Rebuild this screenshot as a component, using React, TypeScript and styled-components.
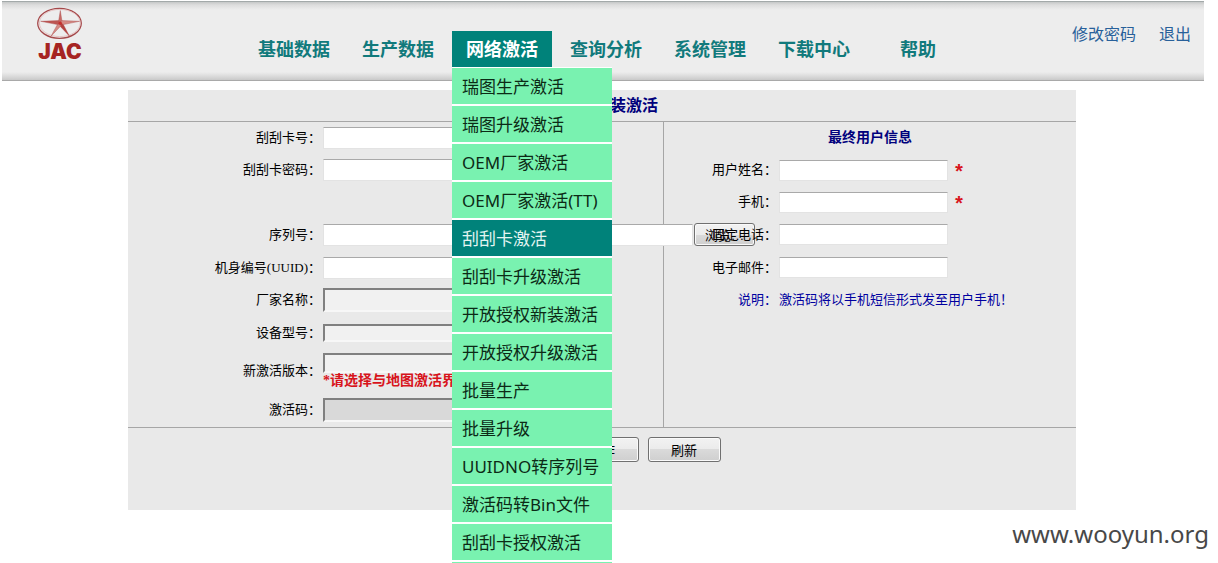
import React from "react";
import styled, { createGlobalStyle, css } from "styled-components";

const uiFont = `"Noto Sans", "Noto Sans CJK SC", sans-serif`;
const formFont = `"Liberation Serif", "Noto Sans CJK SC", serif`;

const GlobalStyle = createGlobalStyle`
  *, *::before, *::after { box-sizing: border-box; }
  body { margin: 0; background: #fff; font-family: ${uiFont}; color: #000; }
  ul { margin: 0; padding: 0; list-style: none; }
  a { text-decoration: none; }
`;

const Shell = styled.div`
  display: flow-root;
  min-height: 100vh;
`;

const Header = styled.header`
  display: flex;
  align-items: flex-start;
  height: 80px;
  margin: 1px 14px 9px 2px;
  border-top: 1px solid #a3a9a9;
  border-bottom: 1px solid #a9a9a9;
  background: linear-gradient(
    to bottom,
    #c6c8c8 0,
    #ddd 3px,
    #ededed 8px,
    #ededed calc(100% - 8px),
    #dcdcdc calc(100% - 4px),
    #c9c9c9 100%
  );
`;

const LogoLink = styled.a`
  flex: none;
  width: 242px;
  padding: 4px 0 0 28px;
  line-height: 0;
`;

const Nav = styled.ul`
  display: flex;
  gap: 4px;
  padding-top: 29px;
`;

const NavItem = styled.li`
  position: relative;
  width: 100px;
`;

const NavLink = styled.a<{ $active?: boolean }>`
  display: block;
  line-height: 36px;
  text-align: center;
  font-size: 18px;
  font-weight: 700;
  color: ${(p) => (p.$active ? "#fff" : "#117a7c")};
  background: ${(p) => (p.$active ? "#00827a" : "transparent")};
`;

const Menu = styled.ul`
  position: absolute;
  z-index: 10;
  top: 100%;
  left: 0;
  width: 160px;
  padding-top: 1px;
  background: #fff;
  &::after {
    content: "";
    display: block;
    height: 1px;
    background: #79f2b0;
  }
`;

const MenuLink = styled.a<{ $active?: boolean }>`
  display: block;
  height: 36px;
  margin-bottom: 2px;
  padding-left: 10px;
  line-height: 38px;
  font-size: 17px;
  white-space: nowrap;
  color: ${(p) => (p.$active ? "#e4f5f2" : "#0c2a16")};
  background: ${(p) => (p.$active ? "#00827a" : "#79f2b0")};
`;

const Account = styled.div`
  display: flex;
  gap: 23px;
  margin-left: auto;
  padding: 20px 13px 0 0;
`;

const AccountLink = styled.a`
  font-size: 16px;
  line-height: 24px;
  white-space: nowrap;
  color: #28609a;
`;

const Page = styled.main`
  padding-right: 14px;
`;

const Panel = styled.form`
  max-width: 948px;
  margin: 0 auto;
  background: #e9e9e9;
  font-family: ${formFont};
  font-size: 13px;
`;

const PanelTitle = styled.h1`
  margin: 0;
  line-height: 31px;
  text-align: center;
  font-size: 16px;
  color: #00007c;
`;

const Columns = styled.div`
  display: grid;
  grid-template-columns: minmax(0, 536fr) minmax(0, 412fr);
  border-top: 1px solid #a6a6a6;
  border-bottom: 1px solid #a6a6a6;
`;

const Column = styled.section<{ $divided?: boolean }>`
  ${(p) => p.$divided && css`border-right: 1px solid #a6a6a6;`}
`;

const SectionTitle = styled.h2`
  margin: 0;
  line-height: 32px;
  text-align: center;
  font-size: 14px;
  color: #00007c;
`;

const Row = styled.div<{ $label: number; $height?: number; $after?: number }>`
  display: grid;
  grid-template-columns: ${(p) => p.$label}px minmax(0, 1fr);
  column-gap: 2px;
  align-items: center;
  height: ${(p) => p.$height ?? 33}px;
  margin-bottom: ${(p) => p.$after ?? 0}px;
  white-space: nowrap;
`;

const Note = styled(Row)`
  color: #0000a0;
`;

const Label = styled.label`
  text-align: right;
  line-height: 16px;
`;

const NoteLabel = styled.span`
  text-align: right;
  line-height: 16px;
`;

const NoteText = styled.span`
  line-height: 16px;
`;

const Field = styled.div<{ $stacked?: boolean }>`
  display: flex;
  flex-direction: ${(p) => (p.$stacked ? "column" : "row")};
  align-items: ${(p) => (p.$stacked ? "flex-start" : "center")};
`;

const TextInput = styled.input<{ $wide?: boolean; $height?: number }>`
  flex: none;
  width: ${(p) => (p.$wide ? 370 : 169)}px;
  height: ${(p) => p.$height ?? 22}px;
  padding: 0 4px;
  border: 1px solid #e3e3e3;
  border-top-color: #a9a9a9;
  background: #fff;
  font: inherit;
`;

const InsetInput = styled(TextInput)<{ $muted?: boolean }>`
  border: 2px solid;
  border-color: #808080 #f7f7f7 #f7f7f7 #808080;
  background: ${(p) => (p.$muted ? "#d9d9d9" : "#f1f1f1")};
`;

const Hint = styled.strong`
  line-height: 16px;
  font-size: 14px;
  color: #d8141c;
`;

const Required = styled.span`
  margin-left: 5px;
  padding-top: 8px;
  line-height: 16px;
  font-family: "Liberation Mono", monospace;
  font-size: 20px;
  font-weight: bold;
  color: #d8141c;
`;

const Button = styled.button<{ $compact?: boolean }>`
  flex: none;
  width: ${(p) => (p.$compact ? 61 : 73)}px;
  height: ${(p) => (p.$compact ? 23 : 25)}px;
  padding: 0;
  border: 1px solid #707070;
  border-radius: 3px;
  box-shadow: inset 0 0 0 1px #fafafa;
  background: linear-gradient(#f2f2f2 0, #ebebeb 50%, #dadada 50%, #cfcfcf 100%);
  color: #000;
  font-family: ${formFont};
  font-size: 13px;
`;

const BrowseButton = styled(Button)`
  margin-left: 1px;
`;

const Actions = styled.div`
  display: flex;
  justify-content: center;
  gap: 9px;
  min-height: 82px;
  padding: 9px 0 0 82px;
`;

const Watermark = styled.footer`
  padding: 6px 9px 0 0;
  text-align: right;
  font-family: "Noto Sans", sans-serif;
  font-size: 24px;
  line-height: 36px;
  color: #484848;
`;

const navItems = ["基础数据", "生产数据", "网络激活", "查询分析", "系统管理", "下载中心", "帮助"];
const activeNav = "网络激活";

const menuItems = [
  "瑞图生产激活",
  "瑞图升级激活",
  "OEM厂家激活",
  "OEM厂家激活(TT)",
  "刮刮卡激活",
  "刮刮卡升级激活",
  "开放授权新装激活",
  "开放授权升级激活",
  "批量生产",
  "批量升级",
  "UUIDNO转序列号",
  "激活码转Bin文件",
  "刮刮卡授权激活",
];
const activeMenu = "刮刮卡激活";

const LEFT = 193;
const RIGHT = 113;

const customerFields = [
  { id: "name", label: "用户姓名：", required: true, height: 32 },
  { id: "mobile", label: "手机：", required: true, height: 32 },
  { id: "phone", label: "固定电话：", required: false, height: 33 },
  { id: "email", label: "电子邮件：", required: false, height: 33 },
];

function Logo() {
  return (
    <svg width="60" height="62" viewBox="30 5 60 62" role="img" aria-label="JAC">
      <ellipse cx="59.5" cy="22.3" rx="21.8" ry="15" fill="none" stroke="#a5484a" strokeWidth="1.3" />
      <ellipse cx="59.8" cy="22" rx="20.4" ry="13.6" fill="none" stroke="#e2b3b1" strokeWidth="0.7" />
      <g stroke="#a84a48" strokeWidth="0.4" strokeLinejoin="round">
        <path d="M60.3 9.5 L61.9 19.6 L60.3 22 L58.7 19.6Z" fill="#c86b66" />
        <path d="M79.5 20.3 L63.3 23.6 L60.3 22 L61.9 19.6Z" fill="#d58c86" />
        <path d="M69.5 35.2 L60.3 25.4 L60.3 22 L63.3 23.6Z" fill="#b5423f" />
        <path d="M51 35.2 L57.4 23.6 L60.3 22 L60.3 25.4Z" fill="#d58c86" />
        <path d="M40.7 20.3 L58.7 19.6 L60.3 22 L57.4 23.6Z" fill="#bd5552" />
      </g>
      <circle cx="60.2" cy="22.2" r="1.7" fill="#c4302d" />
      <text
        x="60"
        y="58"
        textAnchor="middle"
        fontFamily="Inter, sans-serif"
        fontWeight="900"
        fontSize="21"
        fill="#a62422"
      >
        JAC
      </text>
    </svg>
  );
}

export default function App() {
  return (
    <Shell>
      <GlobalStyle />
      <Header>
        <LogoLink href="#">
          <Logo />
        </LogoLink>
        <nav>
          <Nav>
            {navItems.map((item) => (
              <NavItem key={item}>
                <NavLink href="#" $active={item === activeNav}>
                  {item}
                </NavLink>
                {item === activeNav && (
                  <Menu>
                    {menuItems.map((entry) => (
                      <li key={entry}>
                        <MenuLink href="#" $active={entry === activeMenu}>
                          {entry}
                        </MenuLink>
                      </li>
                    ))}
                  </Menu>
                )}
              </NavItem>
            ))}
          </Nav>
        </nav>
        <Account>
          <AccountLink href="#">修改密码</AccountLink>
          <AccountLink href="#">退出</AccountLink>
        </Account>
      </Header>

      <Page>
        <Panel onSubmit={(e) => e.preventDefault()}>
          <PanelTitle>刮刮卡新装激活</PanelTitle>
          <Columns>
            <Column $divided>
              <Row $label={LEFT} $height={32}>
                <Label htmlFor="card">刮刮卡号：</Label>
                <Field>
                  <TextInput id="card" />
                </Field>
              </Row>
              <Row $label={LEFT} $height={32} $after={32}>
                <Label htmlFor="pin">刮刮卡密码：</Label>
                <Field>
                  <TextInput id="pin" />
                </Field>
              </Row>
              <Row $label={LEFT}>
                <Label htmlFor="serial">序列号：</Label>
                <Field>
                  <TextInput id="serial" $wide />
                  <BrowseButton type="button" $compact>
                    浏览…
                  </BrowseButton>
                </Field>
              </Row>
              <Row $label={LEFT}>
                <Label htmlFor="uuid">机身编号(UUID)：</Label>
                <Field>
                  <TextInput id="uuid" />
                </Field>
              </Row>
              <Row $label={LEFT} $height={32}>
                <Label htmlFor="vendor">厂家名称：</Label>
                <Field>
                  <InsetInput id="vendor" $height={24} readOnly />
                </Field>
              </Row>
              <Row $label={LEFT}>
                <Label htmlFor="model">设备型号：</Label>
                <Field>
                  <InsetInput id="model" $height={18} readOnly />
                </Field>
              </Row>
              <Row $label={LEFT} $height={43}>
                <Label htmlFor="version">新激活版本：</Label>
                <Field $stacked>
                  <InsetInput id="version" $height={20} readOnly />
                  <Hint>*请选择与地图激活界</Hint>
                </Field>
              </Row>
              <Row $label={LEFT} $height={35}>
                <Label htmlFor="code">激活码：</Label>
                <Field>
                  <InsetInput id="code" $height={24} $muted readOnly />
                </Field>
              </Row>
            </Column>

            <Column>
              <SectionTitle>最终用户信息</SectionTitle>
              {customerFields.map((f) => (
                <Row key={f.id} $label={RIGHT} $height={f.height}>
                  <Label htmlFor={f.id}>{f.label}</Label>
                  <Field>
                    <TextInput id={f.id} $height={21} required={f.required} />
                    {f.required && <Required>*</Required>}
                  </Field>
                </Row>
              ))}
              <Note $label={RIGHT} $height={32}>
                <NoteLabel>说明：</NoteLabel>
                <NoteText>激活码将以手机短信形式发至用户手机！</NoteText>
              </Note>
            </Column>
          </Columns>
          <Actions>
            <Button type="submit">操作</Button>
            <Button type="reset">刷新</Button>
          </Actions>
        </Panel>
      </Page>
      <Watermark>www.wooyun.org</Watermark>
    </Shell>
  );
}
